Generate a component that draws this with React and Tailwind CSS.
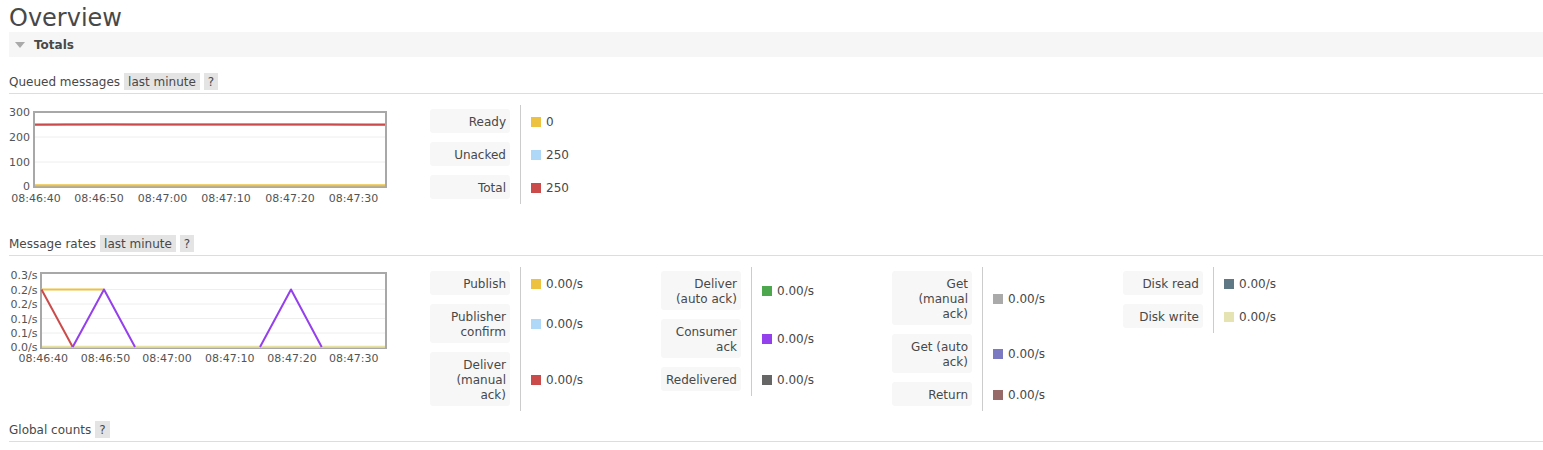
import { Fragment } from "react";

const queued = [
  { label: "Ready", color: "bg-[#edc240]", value: "0" },
  { label: "Unacked", color: "bg-[#afd8f8]", value: "250" },
  { label: "Total", color: "bg-[#cb4b4b]", value: "250" },
];

const rates = [
  [
    { label: "Publish", color: "bg-[#edc240]", value: "0.00/s" },
    { label: "Publisher confirm", color: "bg-[#afd8f8]", value: "0.00/s" },
    { label: "Deliver (manual ack)", color: "bg-[#cb4b4b]", value: "0.00/s" },
  ],
  [
    { label: "Deliver (auto ack)", color: "bg-[#4da74d]", value: "0.00/s" },
    { label: "Consumer ack", color: "bg-[#9440ed]", value: "0.00/s" },
    { label: "Redelivered", color: "bg-[#666666]", value: "0.00/s" },
  ],
  [
    { label: "Get (manual ack)", color: "bg-[#aaaaaa]", value: "0.00/s" },
    { label: "Get (auto ack)", color: "bg-[#7c79c3]", value: "0.00/s" },
    { label: "Return", color: "bg-[#976a6a]", value: "0.00/s" },
  ],
  [
    { label: "Disk read", color: "bg-[#5f7886]", value: "0.00/s" },
    { label: "Disk write", color: "bg-[#e6e3b3]", value: "0.00/s" },
  ],
];

function Heading({ title, badges }) {
  return (
    <div className="flex items-start gap-[4px] border-b border-[#dddddd] pb-[3px]">
      <span className="h-[17px] pt-[2px] leading-[15px]">{title}</span>
      {badges.map((b) => (
        <span key={b} className="h-[17px] bg-[#e4e4e4] px-[4px] pt-[2px] leading-[15px]">
          {b}
        </span>
      ))}
    </div>
  );
}

function Legend({ rows }) {
  return (
    <div className="grid w-[231px] grid-cols-[94px_137px] content-start">
      {rows.map((r) => (
        <Fragment key={r.label}>
          <div className="pt-[4px] pb-[5px] pl-[4px] pr-[10px]">
            <div className="w-[80px] rounded-[3px] bg-[#f7f7f7] px-[4px] pt-[5.5px] pb-[3.5px] text-right">
              {r.label}
            </div>
          </div>
          <div className="flex items-center gap-[5px] border-l border-[#cccccc] pl-[10px]">
            <span className={`size-[10px] ${r.color}`} />
            <span className="pt-[1px]">{r.value}</span>
          </div>
        </Fragment>
      ))}
    </div>
  );
}

function QueuedChart() {
  const xs = [
    [36, "08:46:40"],
    [99, "08:46:50"],
    [162.5, "08:47:00"],
    [226, "08:47:10"],
    [290, "08:47:20"],
    [353.5, "08:47:30"],
  ];
  return (
    <svg width="417" height="100" viewBox="9 105 417 100" className="shrink-0">
      <line x1="34" x2="386" y1="137" y2="137" stroke="#eeeeee" />
      <line x1="34" x2="386" y1="162" y2="162" stroke="#eeeeee" />
      <path d="M34 125 C 80 124.5, 110 123.6, 140 124.6 L 330 124.6 C 350 125, 370 125, 386 125" fill="none" stroke="#e59a9a" strokeWidth="2" />
      <path d="M34 124.5 L386 124.5" fill="none" stroke="#cb4b4b" strokeWidth="2" />
      <rect x="34" y="112" width="352" height="75" fill="none" stroke="#a8a8a8" strokeWidth="2" />
      <path d="M35 185.3 L385 185.3" fill="none" stroke="#edc240" strokeWidth="2" />
      <g className="fill-[#545454] font-['DejaVu_Sans',sans-serif] text-[11px]">
        <text x="30" y="116" textAnchor="end">300</text>
        <text x="30" y="141" textAnchor="end">200</text>
        <text x="30" y="166" textAnchor="end">100</text>
        <text x="30" y="190" textAnchor="end">0</text>
        {xs.map(([x, t]) => (
          <text key={t} x={x} y="202" textAnchor="middle">
            {t}
          </text>
        ))}
      </g>
    </svg>
  );
}

function RatesChart() {
  const xs = [
    [43.3, "08:46:40"],
    [105.5, "08:46:50"],
    [167, "08:47:00"],
    [229.7, "08:47:10"],
    [292, "08:47:20"],
    [353.7, "08:47:30"],
  ];
  const ys = [
    [279, "0.3/s"],
    [294, "0.2/s"],
    [308, "0.2/s"],
    [322.5, "0.1/s"],
    [337, "0.1/s"],
    [351, "0.0/s"],
  ];
  return (
    <svg width="417" height="100" viewBox="9 267 417 100" className="shrink-0">
      {[289.5, 304, 318.5, 333].map((y) => (
        <line key={y} x1="41" x2="386" y1={y} y2={y} stroke="#eeeeee" />
      ))}
      <rect x="41" y="273" width="345" height="75" fill="none" stroke="#a8a8a8" strokeWidth="2" />
      <path d="M42 346.8 L385 346.8" fill="none" stroke="#e8e2a2" strokeWidth="2" />
      <path d="M41 289.5 L104 289.5" fill="none" stroke="#edc240" strokeWidth="2" />
      <path d="M41.5 289.5 L72.7 347" fill="none" stroke="#cb4b4b" strokeWidth="2" />
      <path d="M72.7 347 L104 289.5 L135 347 M260 347 L291 289.5 L321.7 347" fill="none" stroke="#9440ed" strokeWidth="2" strokeLinejoin="round" />
      <g className="fill-[#545454] font-['DejaVu_Sans',sans-serif] text-[11px]">
        {ys.map(([y, t]) => (
          <text key={y} x="37.5" y={y} textAnchor="end">
            {t}
          </text>
        ))}
        {xs.map(([x, t]) => (
          <text key={t} x={x} y="362" textAnchor="middle">
            {t}
          </text>
        ))}
      </g>
    </svg>
  );
}

export default function App() {
  return (
    <div className="bg-white pl-[9px] font-['DejaVu_Sans','Verdana',sans-serif] text-[12px] leading-[15px] text-[#484848]">
      <h1 className="pt-[5px] text-[24px] leading-[27px]">Overview</h1>

      {/* Totals */}
      <div className="flex h-[25px] items-center gap-[9px] bg-[#f6f6f6] pl-[6px]">
        <svg width="10" height="6" viewBox="0 0 10 6">
          <path d="M0 0 L10 0 L5 6 Z" fill="#aaaaaa" />
        </svg>
        <span className="pt-[1px] font-bold">Totals</span>
      </div>

      <div className="mt-[16px]">
        <Heading title="Queued messages" badges={["last minute", "?"]} />
      </div>
      <div className="mt-[11px] flex">
        <QueuedChart />
        <Legend rows={queued} />
      </div>

      <div className="mt-[30px]">
        <Heading title="Message rates" badges={["last minute", "?"]} />
      </div>
      <div className="mt-[11px] flex">
        <RatesChart />
        {rates.map((col, i) => (
          <Legend key={i} rows={col} />
        ))}
      </div>

      <div className="mt-[10px]">
        <Heading title="Global counts" badges={["?"]} />
      </div>
    </div>
  );
}
